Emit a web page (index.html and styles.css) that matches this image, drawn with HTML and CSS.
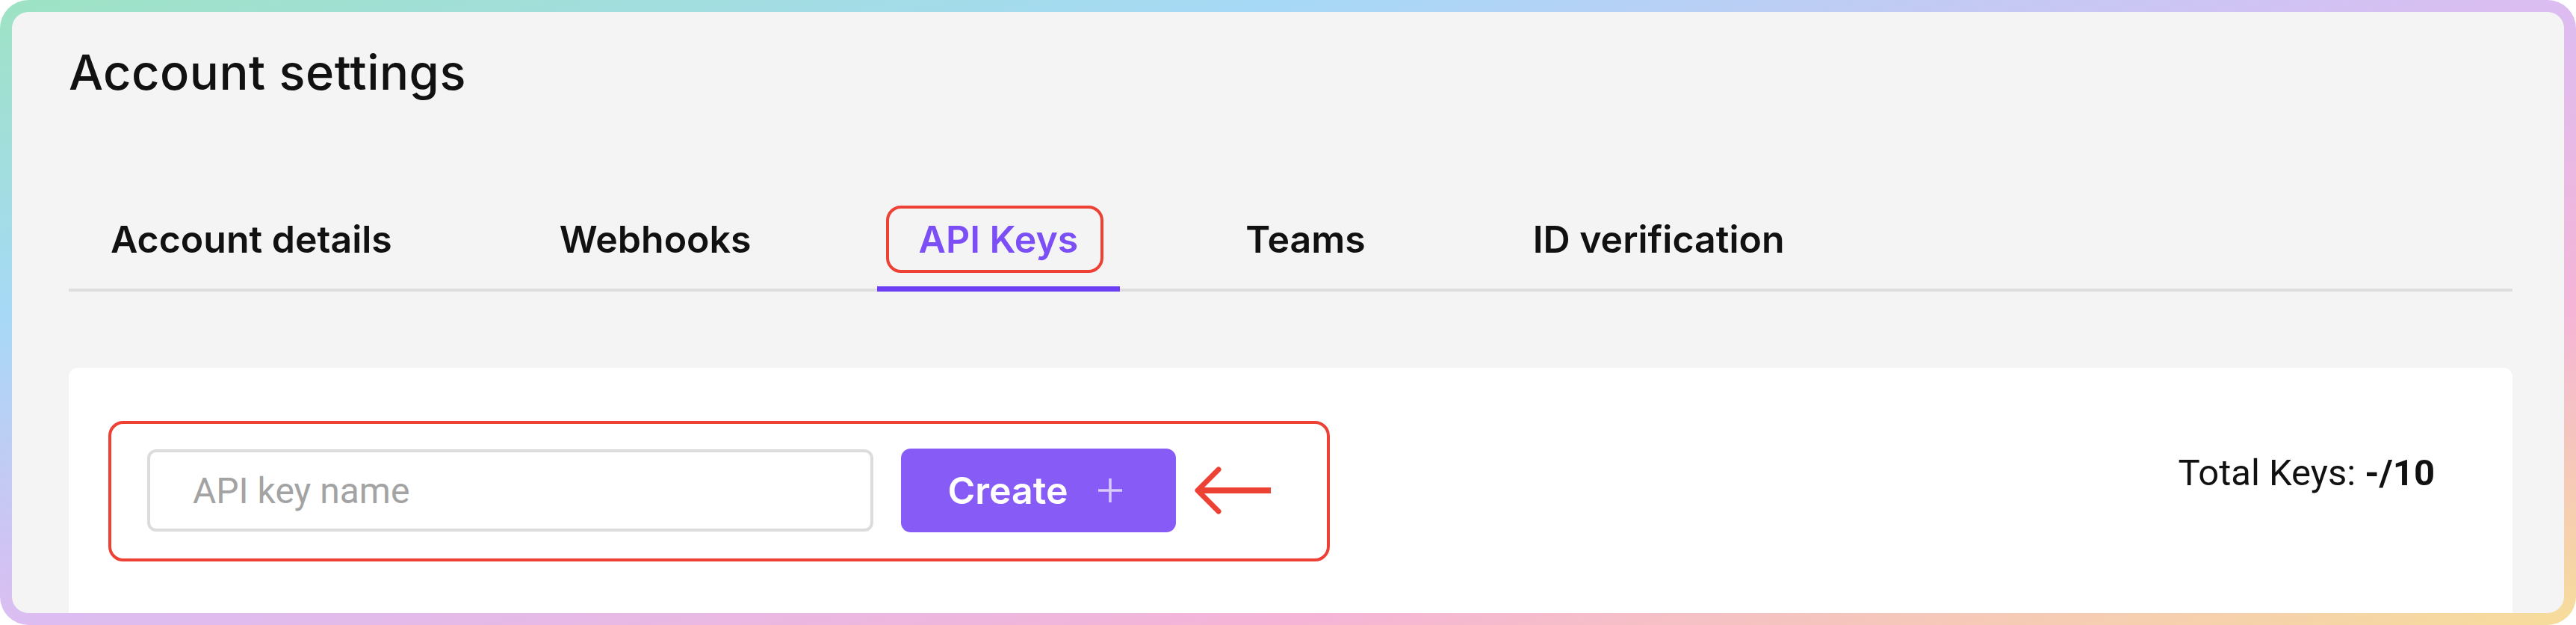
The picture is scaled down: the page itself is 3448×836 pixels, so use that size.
FILE: index.html
```html
<!DOCTYPE html>
<html lang="en">
<head>
<meta charset="utf-8">
<title>Account settings</title>
<link rel="stylesheet" href="styles.css">
</head>
<body>
<div class="frame">
  <main class="panel">
    <h1 class="title">Account settings</h1>
    <nav class="tabs">
      <div class="tab">Account details</div>
      <div class="tab">Webhooks</div>
      <div class="tab active">API Keys<span class="mark"></span></div>
      <div class="tab">Teams</div>
      <div class="tab">ID verification</div>
    </nav>
    <section class="card">
      <div class="create-box">
        <input class="key-input" type="text" placeholder="API key name">
        <button class="create-btn" type="button">
          <span>Create</span>
          <svg class="plus" width="36" height="36" viewBox="0 0 36 36"><path d="M18 2V34M2 18H34" stroke="#d9ccfc" stroke-width="3.5" fill="none"/></svg>
        </button>
        <svg class="arrow" width="104" height="64" viewBox="0 0 104 64"><path d="M103 32H8" stroke="#ee4136" stroke-width="8" fill="none"/><path d="M33 4L5 32L33 60" stroke="#ee4136" stroke-width="7" fill="none" stroke-linecap="round" stroke-linejoin="round"/></svg>
      </div>
      <div class="total">Total Keys: <b>-/10</b></div>
    </section>
  </main>
</div>
</body>
</html>
```
FILE: styles.css
```css
html, body {
  margin: 0;
  padding: 0;
  background: #ffffff;
}

.frame {
  box-sizing: border-box;
  width: 3448px;
  height: 836px;
  padding: 16px;
  border-radius: 38px;
  background: linear-gradient(to bottom right, #9ee3c4 0%, #a6d9f6 25%, #dcbdf2 50%, #f5b4d6 75%, #f6dd9a 100%);
}

.panel {
  box-sizing: border-box;
  height: 804px;
  border-radius: 22px;
  background: #f4f4f4;
  overflow: hidden;
  padding: 49px 69px 0 76px;
  font-family: Inter, "Noto Sans", sans-serif;
  color: #111111;
}

.title {
  margin: 0;
  font-size: 65px;
  line-height: 64px;
  font-weight: 500;
  letter-spacing: 0.5px;
}

.tabs {
  display: flex;
  gap: 112px;
  margin-top: 166px;
  border-bottom: 4px solid #dedede;
}

.tab {
  position: relative;
  padding: 0 56px 38px;
  margin-bottom: -4px;
  border-bottom: 7px solid transparent;
  font-size: 50px;
  line-height: 50px;
  font-weight: 600;
  white-space: nowrap;
}

.tab.active {
  color: #7b4ef6;
  border-bottom-color: #6c3ff5;
}

.mark {
  position: absolute;
  left: 12px;
  top: -20px;
  width: 291px;
  height: 90px;
  box-sizing: border-box;
  border: 4px solid #ee4136;
  border-radius: 20px;
}

.card {
  display: flex;
  justify-content: space-between;
  align-items: flex-start;
  margin-top: 102px;
  height: 400px;
  background: #ffffff;
  border-radius: 12px 12px 0 0;
  padding: 71px 104px 0 53px;
}

.create-box {
  display: flex;
  align-items: center;
  border: 4px solid #ee4136;
  border-radius: 20px;
  padding: 33px 74px 35px 48px;
}

.key-input {
  box-sizing: border-box;
  width: 972px;
  height: 110px;
  margin: 0;
  border: 4px solid #dcdcdc;
  border-radius: 12px;
  padding: 0 0 0 57px;
  background: #ffffff;
  font-family: Roboto, "Liberation Sans", sans-serif;
  font-size: 48px;
  outline: none;
}

.key-input::placeholder {
  color: #a3a3a3;
}

.create-btn {
  display: flex;
  align-items: center;
  justify-content: center;
  gap: 38px;
  box-sizing: border-box;
  width: 368px;
  height: 112px;
  margin: 0 0 0 37px;
  padding: 0 8px 0 0;
  border: none;
  border-radius: 13px;
  background: #875bf6;
  color: #ffffff;
  font-family: Inter, "Noto Sans", sans-serif;
  font-size: 50px;
  font-weight: 600;
}

.plus {
  display: block;
}

.arrow {
  display: block;
  margin-left: 24px;
}

.total {
  margin-top: 45px;
  font-family: Roboto, "Liberation Sans", sans-serif;
  font-size: 49px;
  line-height: 49px;
  color: #111111;
}

.total b {
  font-weight: 700;
}
```
